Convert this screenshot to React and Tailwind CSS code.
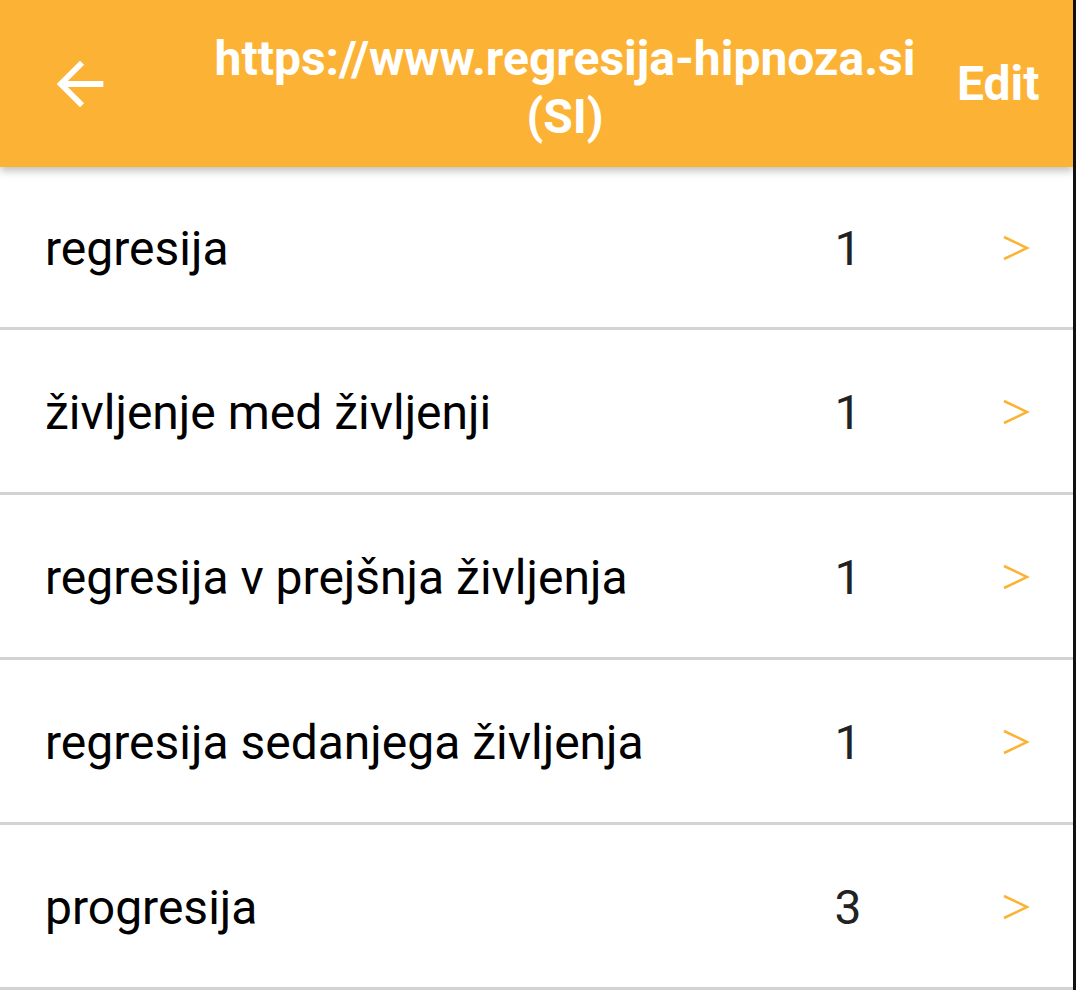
import React from "react";

const rows = [
  ["regresija", "1"],
  ["življenje med življenji", "1"],
  ["regresija v prejšnja življenja", "1"],
  ["regresija sedanjega življenja", "1"],
  ["progresija", "3"],
];

export default function App() {
  return (
    <div
      className="w-[1076px] h-[990px] overflow-hidden bg-white border-r-[3px] border-[#111]"
      style={{ fontFamily: "Roboto, 'Liberation Sans', sans-serif" }}
    >
      <div className="relative z-10 h-[167px] bg-[#fcb335] flex items-center shadow-[0_4px_8px_rgba(0,0,0,0.25)]">
        <div className="w-[200px] shrink-0 flex items-center pl-[45px]">
          <svg width="70" height="70" viewBox="0 0 24 24" fill="#fff">
            <path d="M20 11H7.83l5.59-5.59L12 4l-8 8 8 8 1.41-1.41L7.83 13H20v-2z" />
          </svg>
        </div>
        <div className="flex-1 text-center text-white font-bold text-[48px] leading-[58px] mt-[9px] whitespace-nowrap">
          https://www.regresija-hipnoza.si
          <br />
          (SI)
        </div>
        <div className="w-[143px] shrink-0 text-white font-bold text-[48px] pl-[27px] pt-[1px]">Edit</div>
      </div>
      <div className="flex flex-col">
        {rows.map(([label, count], i) => (
          <div
            key={i}
            className={`flex items-center border-b-[3px] border-[#d3d3d3] pt-[4px] ${i === 0 ? "h-[163px]" : "h-[165px]"}`}
          >
            <div className="flex-1 pl-[45px] text-[48px] text-black">{label}</div>
            <div className="w-[60px] text-center text-[48px] text-[#222] mr-[125px]">{count}</div>
            <div className="w-[70px] flex justify-start">
              <svg width="28" height="28" viewBox="0 0 28 28" className="-ml-[1px]">
                <polyline points="2,2 25,13 2,24" fill="none" stroke="#fcb335" strokeWidth="2.5" />
              </svg>
            </div>
          </div>
        ))}
      </div>
    </div>
  );
}
